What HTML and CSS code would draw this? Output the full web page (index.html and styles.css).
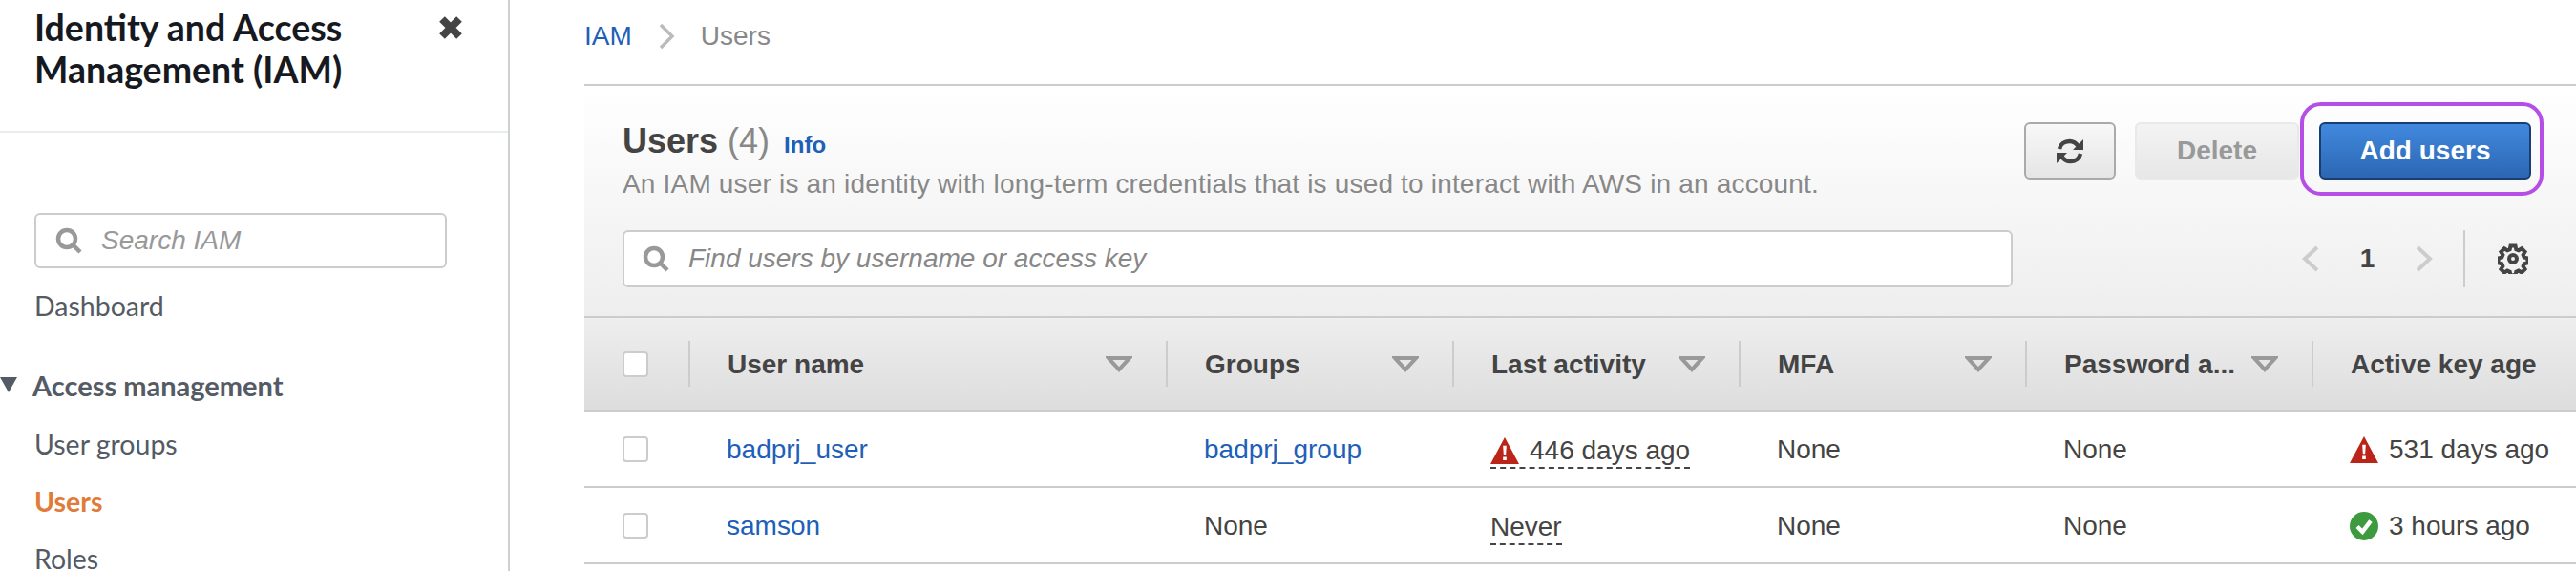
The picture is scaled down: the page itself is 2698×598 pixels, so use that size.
FILE: index.html
```html
<!DOCTYPE html>
<html lang="en">
<head>
<meta charset="utf-8">
<title>IAM Users</title>
<link rel="stylesheet" href="styles.css">
</head>
<body>
<div class="app">
  <aside class="side">
    <header class="side-head">
      <h2 class="side-title">Identity and Access Management (IAM)</h2>
      <svg class="close" viewBox="0 0 26 26"><path d="M4 4 22 22M22 4 4 22"/></svg>
    </header>
    <div class="side-search">
      <svg class="glass glass-side" viewBox="0 0 28 28"><circle cx="12" cy="12" r="9"/><path d="M18.5 18.5 26 26"/></svg>
      <span>Search IAM</span>
    </div>
    <a class="nav nav-first">Dashboard</a>
    <div class="nav-group"><svg class="caret" viewBox="0 0 18 16"><path d="M0 0H18L9 16Z"/></svg>Access management</div>
    <a class="nav nav-g1">User groups</a>
    <a class="nav nav-active">Users</a>
    <a class="nav">Roles</a>
  </aside>
  <main class="main">
    <nav class="crumbs">
      <a class="link">IAM</a>
      <svg class="crumb-sep" viewBox="0 0 17 28"><path d="M2 2 14 14 2 26"/></svg>
      <span class="crumb-cur">Users</span>
    </nav>
    <section class="panel">
      <div class="panel-top">
        <div class="panel-info">
          <h1 class="panel-title">Users <span class="count">(4)</span><a class="info">Info</a></h1>
          <p class="panel-desc">An IAM user is an identity with long-term credentials that is used to interact with AWS in an account.</p>
        </div>
        <div class="actions">
          <button class="btn btn-refresh" aria-label="Refresh">
            <svg class="refresh" viewBox="0 0 28 29"><path class="arc" d="M3 12C4 7 8.500 4 13.500 4 17.500 4 20.500 6 22.500 9"/><path class="head" d="M28 2V13H17Z"/><path class="arc" d="M25 17C24 22 19.500 25 14.500 25 10.500 25 7.500 23 5.500 20"/><path class="head" d="M0 27V16H11Z"/></svg>
          </button>
          <button class="btn btn-off">Delete</button>
          <button class="btn btn-main">Add users</button>
        </div>
      </div>
      <div class="toolbar">
        <div class="find">
          <svg class="glass glass-find" viewBox="0 0 28 28"><circle cx="12" cy="12" r="9"/><path d="M18.500 18.500 26 26"/></svg>
          <span>Find users by username or access key</span>
        </div>
        <div class="pager">
          <svg class="pg-chev" viewBox="0 0 18 28"><path d="M16 2 3 14 16 26"/></svg>
          <span class="pg-num">1</span>
          <svg class="pg-chev" viewBox="0 0 18 28"><path d="M2 2 15 14 2 26"/></svg>
          <span class="pg-div"></span>
          <svg class="gear" viewBox="0 0 32 32"><path d="M13.500 2.500h5l.8 3.700 2.600 1.100 3.200-2 3.500 3.500-2 3.200 1.100 2.600 3.700.8v5l-3.700.8-1.100 2.600 2 3.200-3.500 3.500-3.200-2-2.600 1.100-.8 3.700h-5l-.8-3.700-2.600-1.100-3.200 2-3.500-3.500 2-3.200-1.100-2.600-3.700-.8v-5l3.700-.8 1.100-2.600-2-3.200 3.500-3.500 3.200 2 2.600-1.100z"/><circle cx="16" cy="16" r="4"/></svg>
        </div>
      </div>
      <div class="table">
        <div class="row row-head">
          <div class="chk-cell"><span class="chk chk-head"></span></div>
          <div class="th"><span>User name</span><svg class="sort" viewBox="0 0 28 17"><path d="M3 2H25L14 14Z"/></svg></div>
          <div class="th"><span>Groups</span><svg class="sort" viewBox="0 0 28 17"><path d="M3 2H25L14 14Z"/></svg></div>
          <div class="th"><span>Last activity</span><svg class="sort" viewBox="0 0 28 17"><path d="M3 2H25L14 14Z"/></svg></div>
          <div class="th"><span>MFA</span><svg class="sort" viewBox="0 0 28 17"><path d="M3 2H25L14 14Z"/></svg></div>
          <div class="th"><span>Password a...</span><svg class="sort" viewBox="0 0 28 17"><path d="M3 2H25L14 14Z"/></svg></div>
          <div class="th th-last"><span>Active key age</span></div>
        </div>
        <div class="row">
          <div class="chk-cell"><span class="chk"></span></div>
          <div class="td"><a class="link">badprj_user</a></div>
          <div class="td"><a class="link">badprj_group</a></div>
          <div class="td"><span class="dashed"><svg class="stat" viewBox="0 0 28 26"><path class="warn" d="M14 0 28 26H0Z"/><path class="mark" d="M12.300 8h3.400l-.6 9h-2.200zM12.300 19h3.400v3.400h-3.400z"/></svg>446 days ago</span></div>
          <div class="td">None</div>
          <div class="td">None</div>
          <div class="td"><svg class="stat" viewBox="0 0 28 26"><path class="warn" d="M14 0 28 26H0Z"/><path class="mark" d="M12.300 8h3.400l-.6 9h-2.200zM12.300 19h3.400v3.400h-3.400z"/></svg>531 days ago</div>
        </div>
        <div class="row">
          <div class="chk-cell"><span class="chk"></span></div>
          <div class="td"><a class="link">samson</a></div>
          <div class="td">None</div>
          <div class="td"><span class="dashed">Never</span></div>
          <div class="td">None</div>
          <div class="td">None</div>
          <div class="td"><svg class="stat" viewBox="0 0 28 28"><circle class="ok" cx="14" cy="14" r="14"/><path class="tick" d="M7.500 14.500 12.500 19.500 20.500 9"/></svg>3 hours ago</div>
        </div>
      </div>
    </section>
  </main>
</div>
</body>
</html>
```

FILE: styles.css
```css
* { box-sizing: border-box; }
html, body { margin: 0; height: 100%; overflow: hidden; background: #fff; }
body { font-family: "Liberation Sans", Arial, sans-serif; font-size: 28px; color: #444; }
.app { display: flex; height: 598px; }
.side { flex: 0 0 534px; border-right: 2px solid #ccd0d3; font-family: Lato, "Noto Sans", sans-serif; color: #545b64; }
.side-head { height: 139px; padding: 7px 47px 0 36px; display: flex; justify-content: space-between; border-bottom: 2px solid #eaeded; }
.side-title { margin: 0; width: 400px; font-size: 37.500px; line-height: 44px; font-weight: 700; color: #16191f; }
.close { width: 26px; height: 26px; margin-top: 9px; fill: none; stroke: #444; stroke-width: 8; }
.side-search { margin: 84px 0 0 36px; width: 432px; height: 58px; border: 2px solid #ccc; border-radius: 6px; display: flex; align-items: center; gap: 20px; padding-left: 20px; font-family: "Liberation Sans", sans-serif; font-style: italic; color: #999; }
.glass { width: 28px; height: 28px; fill: none; stroke: #999; stroke-width: 4.5; flex: none; }
.nav { display: block; padding-left: 36px; line-height: 40px; height: 40px; margin-top: 20px; font-size: 28.500px; }
.nav-first { margin-top: 19px; }
.nav-group { display: flex; align-items: center; gap: 16px; height: 40px; margin-top: 43px; font-weight: 700; font-size: 29px; }
.caret { width: 18px; height: 16px; fill: #545b64; }
.nav-g1 { margin-top: 22px; }
.nav-active { color: #e07b39; font-weight: 700; }

.main { flex: 1; padding-left: 78px; min-width: 0; }
.link { color: #1f5fb8; }
.crumbs { height: 90px; border-bottom: 2px solid #ccc; display: flex; align-items: center; padding-bottom: 12px; }
.crumb-sep { width: 17px; height: 28px; margin: 0 27px 0 28px; fill: none; stroke: #bbb; stroke-width: 3.5; }
.crumb-cur { color: #888; }

.panel { background: linear-gradient(#fff, #eee 242px); padding-top: 38px; }
.panel-top { display: flex; justify-content: space-between; padding: 0 47px 0 40px; height: 113px; }
.panel-title { margin: 0; font-size: 36px; line-height: 40px; font-weight: 700; color: #444; }
.count { font-weight: 400; color: #888; }
.info { font-size: 24px; color: #1f5fb8; margin-left: 15px; }
.panel-desc { margin: 1px 0 0; line-height: 40px; color: #888; letter-spacing: .18px; }
.actions { display: flex; gap: 20px; height: 60px; }
.btn { height: 60px; border-radius: 6px; font: 700 28px "Liberation Sans", sans-serif; padding: 0; position: relative; }
.btn-refresh { width: 96px; background: linear-gradient(#f8f8f8, #e5e5e5); border: 2px solid #aaa; display: flex; align-items: center; justify-content: center; }
.refresh { width: 28px; height: 29px; }
.arc { fill: none; stroke: #444; stroke-width: 4.5; }
.head { fill: #444; }
.btn-off { width: 172px; background: linear-gradient(#f3f3f3, #e7e7e7); border: 2px solid #e9e9e9; color: #999; }
.btn-main { width: 222px; margin-left: 1px; background: linear-gradient(#4189de, #2c66b3); border: 2px solid #1a3e73; color: #fff; }
.btn-main::after { content: ""; position: absolute; left: -22px; right: -15px; top: -23px; bottom: -19px; border: 4px solid #b44ee6; border-radius: 22px; }

.toolbar { display: flex; justify-content: space-between; align-items: center; padding: 0 47px 0 40px; height: 60px; margin-bottom: 30px; }
.find { width: 1456px; height: 60px; background: #fff; border: 2px solid #ccc; border-radius: 6px; display: flex; align-items: center; gap: 20px; padding-left: 19px; font-style: italic; color: #888; }
.pager { display: flex; align-items: center; margin-right: 3px; }
.pg-chev { width: 18px; height: 28px; fill: none; stroke: #ccc; stroke-width: 4; }
.pg-num { width: 101px; text-align: center; font-weight: 700; }
.pg-div { width: 2px; height: 60px; background: #ccc; margin: 0 34px 0 32px; }
.gear { width: 32px; height: 32px; fill: none; stroke: #444; stroke-width: 4; }

.table { background: #fff; }
.row { display: grid; grid-template-columns: 109px 500px 300px 300px 300px 300px 1fr; align-items: center; height: 80px; border-bottom: 2px solid #ccc; }
.row-head { height: 100px; border-top: 2px solid #ccc; background: linear-gradient(#eee, #ddd); font-weight: 700; }
.chk-cell { padding-left: 40px; display: flex; }
.chk { width: 27px; height: 27px; background: #fff; border: 2px solid #ccc; border-radius: 4px; }
.th { height: 48px; border-left: 2px solid #ccc; padding: 1px 35px 0 39px; display: flex; align-items: center; justify-content: space-between; white-space: nowrap; }
.th-last { padding-right: 0; }
.sort { width: 28px; height: 17px; fill: none; stroke: #999; stroke-width: 4; flex: none; }
.td { padding: 2px 0 0 40px; white-space: nowrap; display: flex; align-items: center; }
.dashed { display: inline-flex; align-items: center; border-bottom: 2px dashed #444; padding-bottom: 1px; margin-top: 4px; }
.stat { width: 30px; height: 30px; margin-right: 11px; flex: none; }
.warn { fill: #bb2418; }
.mark { fill: #fff; }
.ok { fill: #3d9a3f; }
.tick { fill: none; stroke: #fff; stroke-width: 4; }
```
